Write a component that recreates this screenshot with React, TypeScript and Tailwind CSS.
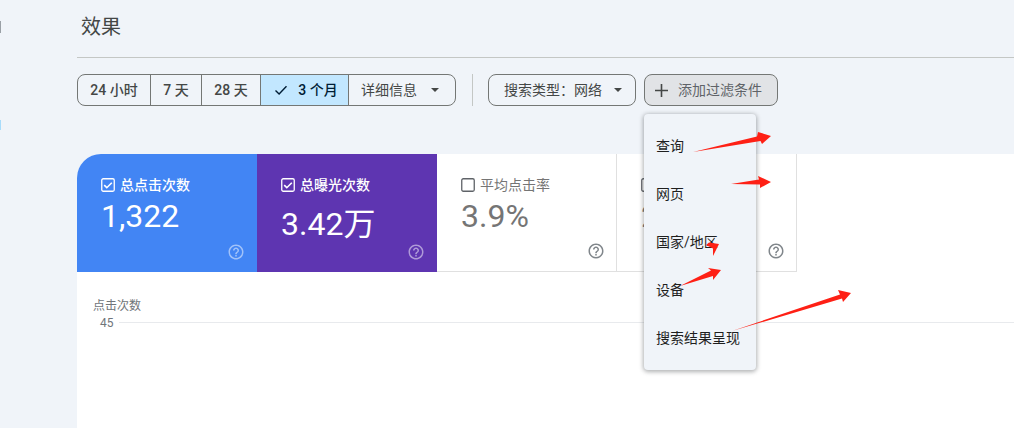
import React from "react";

const font = { fontFamily: '"Roboto", "Noto Sans CJK SC", sans-serif' };

function Help({ color }: { color: string }) {
  return (
    <svg width="18" height="18" viewBox="0 0 24 24" fill={color}>
      <path d="M11 18h2v-2h-2v2zm1-16C6.48 2 2 6.48 2 12s4.48 10 10 10 10-4.48 10-10S17.52 2 12 2zm0 18c-4.41 0-8-3.59-8-8s3.59-8 8-8 8 3.59 8 8-3.59 8-8 8zm0-14c-2.21 0-4 1.79-4 4h2c0-1.1.9-2 2-2s2 .9 2 2c0 2-3 1.75-3 5h2c0-2.25 3-2.5 3-5 0-2.21-1.79-4-4-4z" />
    </svg>
  );
}

function Check({ on }: { on: boolean }) {
  return on ? (
    <svg width="14" height="14" viewBox="0 0 14 14" className="shrink-0">
      <rect x="0.75" y="0.75" width="12.5" height="12.5" rx="1.5" fill="none" stroke="#fff" strokeWidth="1.3" />
      <path d="M3.2 7.2l2.6 2.5 5-5" fill="none" stroke="#fff" strokeWidth="1.6" />
    </svg>
  ) : (
    <svg width="14" height="14" viewBox="0 0 14 14" className="shrink-0">
      <rect x="0.75" y="0.75" width="12.5" height="12.5" rx="1.5" fill="none" stroke="#5f6368" strokeWidth="1.3" />
    </svg>
  );
}

function Card({
  label,
  value,
  on,
  bg,
  valuePt,
  rounded,
}: {
  label: string;
  value: string;
  on: boolean;
  bg: string;
  valuePt: string;
  rounded?: boolean;
}) {
  return (
    <div
      className={`relative w-[180px] h-[118px] pl-6 pt-[21px] ${bg} ${rounded ? "rounded-tl-[24px]" : ""} ${
        on ? "text-white" : "text-[#757575] border-r border-b border-[#e0e0e0]"
      }`}
    >
      <div className="flex items-center gap-[6px] h-5">
        <Check on={on} />
        <span className={`text-[14px] leading-5 -ml-px ${on ? "font-medium" : ""}`}>{label}</span>
      </div>
      <div className={`text-[32px] leading-[38px] ${valuePt}`}>{value}</div>
      <div className={`absolute bottom-[11px] ${on ? "right-3 opacity-50" : "right-[11px]"}`}>
        <Help color={on ? "#fff" : "#80868b"} />
      </div>
    </div>
  );
}

const seg = "h-full flex items-center justify-center border-r border-[#747775]";

export default function App() {
  return (
    <div style={font} className="relative w-[1014px] h-[428px] overflow-hidden bg-[#f0f4f9] text-[#444746]">
      <div className="absolute left-0 top-[21px] w-px h-3 bg-[#9aa0a6]" />
      <div className="absolute left-0 top-[120px] w-px h-[10px] bg-[#a8dcfb]" />

      <div className="ml-[77px] flex flex-col h-full">
        <div className="h-[58px] border-b border-[#c4c7c5] pl-1 pt-[13px] text-[20px] leading-7">效果</div>

        <div className="flex items-center h-8 mt-4 text-[14px]">
          <div className="flex h-8 w-[379px] items-center rounded-lg border border-[#747775] overflow-hidden">
            <div className={`${seg} w-[73px] font-medium`}>24 小时</div>
            <div className={`${seg} w-[51px] font-medium`}>7 天</div>
            <div className={`${seg} w-[59px] font-medium`}>28 天</div>
            <div className={`${seg} w-[88px] bg-[#c2e7ff] text-[#001d35] font-medium pl-[3px] gap-[10px]`}>
              <svg width="14" height="14" viewBox="0 0 14 14">
                <path d="M1.5 7.5l3.6 3.5 7.4-7.8" fill="none" stroke="currentColor" strokeWidth="1.4" />
              </svg>
              <span>3 个月</span>
            </div>
            <div className="h-full flex-1 flex items-center pl-[12px] gap-[14px]">
              <span>详细信息</span>
              <svg width="8" height="4" viewBox="0 0 10 5" fill="currentColor">
                <path d="M0 0h10L5 5z" />
              </svg>
            </div>
          </div>
          <div className="w-px h-8 bg-[#c4c7c5] ml-4 mr-[15px]" />
          <div className="flex h-8 w-[148px] items-center pl-[15px] gap-[12px] rounded-lg border border-[#747775]">
            <span>搜索类型：网络</span>
            <svg width="8" height="4" viewBox="0 0 10 5" fill="currentColor">
              <path d="M0 0h10L5 5z" />
            </svg>
          </div>
          <div className="flex h-8 w-[134px] ml-2 items-center pl-[10px] gap-[10px] rounded-lg border border-[#747775] bg-[#e1e3e6]">
            <svg width="13" height="13" viewBox="0 0 13 13">
              <path d="M6.5 0v13M0 6.5h13" stroke="#444746" strokeWidth="1.6" />
            </svg>
            <span className="text-[#5f6368]">添加过滤条件</span>
          </div>
        </div>

        <div className="mt-[48px] flex-1 bg-white rounded-tl-[24px]">
          <div className="flex">
            <Card label="总点击次数" value="1,322" on bg="bg-[#4285f4]" valuePt="pt-[2px]" rounded />
            <Card label="总曝光次数" value="3.42万" on bg="bg-[#5e35b1]" valuePt="pt-[10px]" />
            <Card label="平均点击率" value="3.9%" on={false} bg="bg-white" valuePt="pt-[2px]" />
            <Card label="平均排名" value="27.8" on={false} bg="bg-white" valuePt="pt-[2px]" />
          </div>
          <div className="pl-4 pt-[26px] text-[12px] text-[#70757a]">
            <div className="leading-4">点击次数</div>
            <div className="flex items-center pl-[7px] leading-4">
              <span className="w-[19px] relative top-px">45</span>
              <div className="flex-1 h-px bg-[#e8eaed]" />
            </div>
          </div>
        </div>
      </div>

      <div className="absolute left-[644px] top-[114px] w-[112px] h-[256px] py-2 rounded bg-[#f0f4f9] shadow-[0_1px_4px_1px_rgba(60,64,67,0.4)] text-[14px] text-[#1f1f1f]">
        {["查询", "网页", "国家/地区", "设备", "搜索结果呈现"].map((t) => (
          <div key={t} className="h-12 flex items-center pl-3 whitespace-nowrap">
            {t}
          </div>
        ))}
      </div>

      <svg className="absolute left-0 top-0 pointer-events-none" width="1014" height="428" fill="#fe2015">
        <polygon points="693,152 757,136.5 758,132 771,136 762,144 760.5,141" />
        <polygon points="731,184 759,179.5 758,176 771,182 760,188 760,184.5" />
        <polygon points="706,245 709,242.5 719,244 713,256 713,248.5" />
        <polygon points="680,286 711,270.5 708,268 721,270 713,280 713,276" />
        <polygon points="732,331 840,294.5 838,290 851,293 843,302 842,298.5" />
      </svg>
    </div>
  );
}
